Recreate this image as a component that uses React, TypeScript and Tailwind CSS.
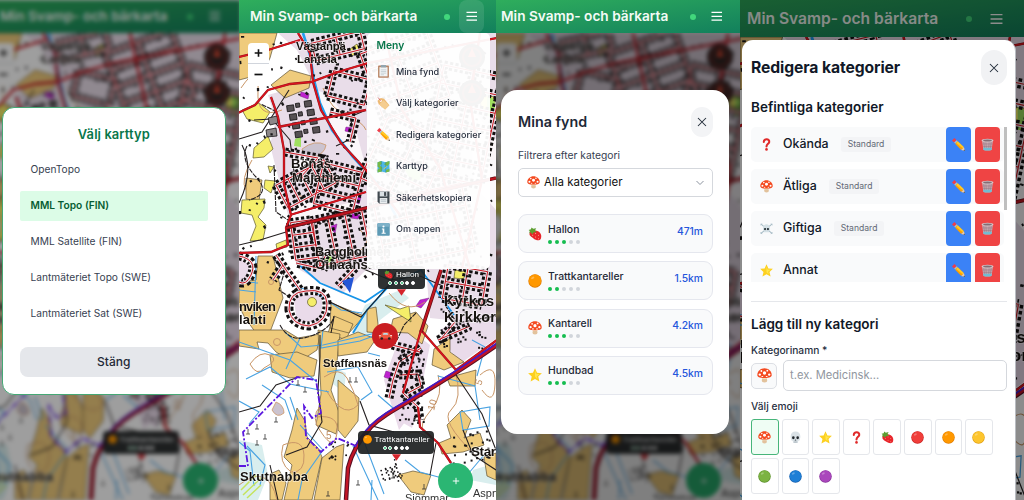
import React from 'react';

type Kind = 'mushroom' | 'clipboard' | 'tag' | 'pencil' | 'map' | 'disk' | 'info' | 'berry' | 'star' | 'question' | 'skull' | 'bones' | 'trash' | 'red' | 'orange' | 'yellow' | 'green' | 'blue' | 'purple';

const discs: Record<string, [string, string]> = {
  red: ['#f03e3a', '#c8201f'], orange: ['#ff9800', '#e07c00'], yellow: ['#fdc52d', '#e09d10'],
  green: ['#7cb342', '#5b8f2a'], blue: ['#1e7fd6', '#155fae'], purple: ['#aa47bc', '#86309a'],
};

function Emoji({ k, className = 'size-3.5' }: { k: Kind; className?: string }) {
  const d = discs[k];
  return (
    <svg viewBox="0 0 24 24" className={`${className} shrink-0`}>
      {d && <><circle cx="12" cy="12" r="11.500" fill={d[1]} /><circle cx="12" cy="11.5" r="10.600" fill={d[0]} /><ellipse cx="8" cy="6.5" rx="3" ry="1.8" fill="#fff" opacity=".3" transform="rotate(-30 8 6.5)" /></>}
      {k === 'mushroom' && <><path d="M9 12h6l1.3 8q.2 3-4.3 3t-4.3-3z" fill="#e2c29c" /><path d="M8.6 15h6.8l.4 2H8.2z" fill="#f7e6c9" /><path d="M.5 11C.5 5 6 .5 12 .5S23.500 5 23.500 11c0 3-3 4.800-11.500 4.800S.5 14 .5 11z" fill="#f44a20" /><g fill="#fff"><circle cx="12" cy="8" r="2.700" /><circle cx="4.500" cy="10.500" r="1.900" /><circle cx="19.500" cy="10.500" r="1.900" /><circle cx="7" cy="4.800" r="1.500" /><circle cx="16.500" cy="4.200" r="1.500" /><ellipse cx="8.500" cy="13.500" rx="1.600" ry=".9" /><ellipse cx="15.500" cy="13.500" rx="1.600" ry=".9" /></g></>}
      {k === 'berry' && <><path d="M3 10c2-5 8-5 13-3 6 2 8 8 6 13-2 4-8 3-12 0S1 15 3 10z" fill="#e8252b" /><g fill="#ffb199"><circle cx="8" cy="14" r=".9" /><circle cx="13" cy="11" r=".9" /><circle cx="13" cy="17" r=".9" /><circle cx="18" cy="14" r=".9" /><circle cx="18" cy="20" r=".9" /></g><path d="M2 11L3 7 1 5l4-1 1-3 3 2 5-1-2 4 3 3-5 0-3 4-2-4z" fill="#5c9e31" /></>}
      {k === 'star' && <><path d="M12 .5l3.500 7.600 8.300.8-6.200 5.700 1.900 8.400L12 18.700l-7.500 4.300 1.900-8.400L.2 8.900l8.300-.8z" fill="#fdd020" /><path d="M12 4l2 6 6 .5-5 3.500 1 5-4-4z" fill="#ffe64e" /></>}
      {k === 'question' && <><path d="M7 7.500C7 0 18 1 17 7.500c-.5 3-5 4-5 8" fill="none" stroke="#e02a2a" strokeWidth="3.800" strokeLinecap="round" /><circle cx="12" cy="21" r="2.400" fill="#e02a2a" /></>}
      {k === 'skull' && <><path d="M3 10C3 4 7 1 12 1s9 3 9 9c0 3-1 4-1 6 0 1.500-2 1.500-3 2l-.5 4H7.500L7 18c-1-.5-3-.5-3-2 0-2-1-3-1-6z" fill="#d9e1e6" /><ellipse cx="8" cy="12.500" rx="2.400" ry="2.600" fill="#20262b" /><ellipse cx="16" cy="12.500" rx="2.400" ry="2.600" fill="#20262b" /><path d="M12 15l-1.300 2.500h2.600zM10 19v3M12 19v3M14 19v3" fill="#20262b" stroke="#8b979e" strokeWidth=".7" /></>}
      {k === 'bones' && <><path d="M2 4l20 17M22 4L2 21" stroke="#a9bdc7" strokeWidth="2.200" strokeLinecap="round" /><path d="M1 5.500l3-2M20 3.500l3 2M1 19.500l3 2M20 21.500l3-2" stroke="#a9bdc7" strokeWidth="1.800" /><path d="M5.500 11c0-9 13-9 13 0v4l-2 1v3h-9v-3l-2-1z" fill="#d5e1e6" /><circle cx="9.300" cy="13" r="2" fill="#1f2a30" /><circle cx="14.700" cy="13" r="2" fill="#1f2a30" /></>}
      {k === 'pencil' && <><path d="M0 4.500L4.500 0l4 4L4 8.500z" fill="#ef3e4a" /><path d="M4 8.500l4.500-4.500 2 2L6 10.500z" fill="#a9bcc6" /><path d="M6 10.500L10.500 6 22 17l-5 5z" fill="#ffa000" /><path d="M7.500 9L10.500 6 22 17l-2 2z" fill="#ffca28" /><path d="M17 22l5-5 2 7z" fill="#efc9a4" /><path d="M21 23.200l2-2 1 2.800z" fill="#37474f" /></>}
      {k === 'trash' && <><path d="M2 6h20l-2.500 16q-7.500 2.500-15 0z" fill="#c9a7ae" /><path d="M5 7l2 15M9 7l1 15M15 7l-1 15M19 7l-2 15M3 11h18M4 15.500h16" stroke="#8e7480" strokeWidth=".9" /><path d="M4 18h16l-.5 4q-7.500 2.500-15 0z" fill="#71bdd2" /><ellipse cx="12" cy="4.500" rx="11" ry="3.200" fill="#d6c7ca" /><ellipse cx="12" cy="4.500" rx="8" ry="1.800" fill="#836d75" /></>}
      {k === 'clipboard' && <><rect x="2" y="1" width="20" height="22.500" rx="1.500" fill="#b98565" /><path d="M4.500 4h15v17h-15z" fill="#f1f4f5" /><path d="M7 0h10v4.500H7z" fill="#93a6af" /><path d="M7 9h10M7 12h10M7 15h10M7 18h6" stroke="#a9b8bf" strokeWidth="1" /></>}
      {k === 'tag' && <><path d="M1 7L7 2l6 1 10 12-8 8L3 13z" fill="#edb971" /><path d="M4 14l8-8 10 9-7 8z" fill="#f5cd90" /><circle cx="7" cy="7" r="2" fill="#fff" /><path d="M2 1l5 6" stroke="#d3464f" strokeWidth="1.300" /></>}
      {k === 'map' && <><path d="M1 4l7-2 8 2 7-2v19l-7 2-8-2-7 2z" fill="#4db6e8" /><path d="M1 4l7-2 1 5-4 3 5 4-1 7-8 2v-5l4-3-4-3zM13 8l3-4 7-2v5l-4 4-4-2zM17 18l6-2v5l-7 2z" fill="#76b947" /><path d="M8 2v19M16 4v19" stroke="#277ea7" strokeWidth=".8" /><path d="M12 17l6-5" stroke="#f4d03f" strokeWidth="1.500" /></>}
      {k === 'disk' && <><path d="M1 1h22v22H4l-3-3z" fill="#414a50" /><path d="M5 1h14v9H5z" fill="#d9e0e4" /><path d="M13 2h4v7h-4z" fill="#424b51" /><path d="M5 13h14v10H5z" fill="#e9edef" /><path d="M7 16h10M7 19h10" stroke="#96a4ad" /></>}
      {k === 'info' && <><rect x=".5" y=".5" width="23" height="23" rx="1.500" fill="#5d9ab5" /><path d="M.5 3q0-2 2-2.500h19q2 .5 2 2.500v4H.5z" fill="#7eb1c8" /><circle cx="12" cy="6.500" r="2" fill="#fff" /><path d="M9 10h4.500v8H16v2H8.500v-2h2v-6H9z" fill="#fff" /></>}
    </svg>
  );
}

/* ---------- map ---------- */
const streetGrid = (cx: number, cy: number, w: number, h: number, deg: number, rows: number, cols: number) => {
  const a = (deg * Math.PI) / 180;
  const p = (x: number, y: number) => `${(cx + x * Math.cos(a) - y * Math.sin(a)).toFixed(1)} ${(cy + x * Math.sin(a) + y * Math.cos(a)).toFixed(1)}`;
  let s = '';
  for (let i = 0; i < rows; i++) { const y = -h / 2 + (h * i) / (rows - 1); s += `M${p(-w / 2, y)}L${p(w / 2, y)}`; }
  for (let i = 0; i < cols; i++) { const x = -w / 2 + (w * i) / (cols - 1); s += `M${p(x, -h / 2)}L${p(x, h / 2)}`; }
  return s;
};

const streets = [
  streetGrid(338, 46, 50, 18, -14, 2, 3),
  streetGrid(349, 88, 38, 26, 14, 2, 2),
  streetGrid(306, 184, 26, 54, 62, 5, 2),
  streetGrid(338, 188, 40, 42, 14, 4, 2),
  streetGrid(341, 238, 52, 46, -12, 2, 4),
  streetGrid(304, 240, 22, 38, -8, 4, 2),
  streetGrid(405, 75, 70, 70, -20, 5, 3),
  streetGrid(462, 125, 60, 110, 12, 7, 3),
  streetGrid(405, 160, 66, 70, 25, 5, 3),
  streetGrid(424, 225, 90, 66, -12, 4, 4),
  streetGrid(465, 285, 40, 34, 10, 3, 3),
  'M330 112L356 118L350 142M285 152L318 158L300 178M326 255L318 268L296 263M355 268L338 286',
  'M289 310Q288 292 306 291Q326 288 327 303Q328 322 309 326Q292 325 289 310Z',
  'M239 256Q258 260 251 275Q246 286 239 282',
  'M276 255L288 273L300 290M283 265L273 280',
  'M421 348L399 362L393 380L389 398M399 375L418 374L421 386L408 393M403 393L418 407L420 420M392 345L420 352M440 340L455 322M438 340L470 326',
].join('');

const mainRoads = [
  'M238 113L255 105L268 90L290 84L311 82L338 72L368 63L497 38',
  'M298 33L310 53L313 82L321 110L341 143L366 170L400 215',
  'M271 97L278 117L284 150L284 184L291 215L286 228L288 245L271 252L238 253',
  'M278 127L366 110M290 215L366 192M239 57L268 50L300 40M421 330L403 393M418 407L420 427L438 443L451 463M421 330L456 370M456 370L497 340',
  'M480 33L470 100L482 180L462 268M385 33L402 110L440 168L470 268',
].join('');

const fields = [
  'M239 33H277L270 58L262 74L239 80Z', 'M271 85L290 70L311 76L309 88L285 98Z', 'M246 178L262 180L259 201L246 199Z',
  'M239 282L256 280L258 256L273 256L283 298L270 332L256 333L245 318L239 306Z', 'M331 303L364 316L349 333L330 328Z M334 316L353 324L346 340L328 333Z',
  'M239 330H285L298 338L320 334L317 350L296 364L276 352L268 343L257 342L259 349L239 346Z',
  'M270 355L297 352L317 360L314 376L290 378L272 372Z', 'M318 330L340 334L336 371L331 390L340 415L336 434L316 425L321 394Z',
  'M338 340L358 332L376 339L367 352L338 356Z', 'M297 408L305 421L307 437L318 448L322 457L312 500H284L292 465L284 457L292 430Z',
  'M322 458L336 447L344 444L340 500H314Z', 'M338 380L359 398L358 421L345 438L338 430Z', 'M367 309L376 307L379 333L367 332Z',
  'M393 319L416 312L428 326L422 344L408 333L390 332Z', 'M434 349L450 338L450 352L464 362L444 370L432 365Z',
  'M447 378L476 370L475 386L450 386Z', 'M447 425L462 410L471 420L464 438L480 433L484 445L463 452L442 454L439 443L451 438Z',
  'M398 475L413 471L431 475L424 495L411 492Z', 'M270 474L279 470L286 483L282 500H270Z', 'M484 457L496 453V480L487 476Z',
];

const dots: [number, number][] = Array.from({ length: 150 }, (_, i) => {
  const x = 241 + ((i * 73.7 + (i % 7) * 11) % 254), y = 36 + ((i * 41.3 + (i % 5) * 17) % 240);
  return [x, y];
});

function Place({ x, y, w, size = 13, children }: { x: number; y: number; w?: number; size?: number; children: string }) {
  return <text x={x} y={y} textLength={w} fontSize={size} fontFamily="Liberation Sans, sans-serif" fontWeight="700" fill="#16120f" stroke="#fff" strokeWidth="1.300" paintOrder="stroke" strokeOpacity=".6">{children}</text>;
}

function Terrain({ className = '' }: { className?: string }) {
  return (
    <svg viewBox="239 33 257 467" className={className} preserveAspectRatio="xMinYMin slice">
      <path d="M239 33H496V500H239z" fill="#fff" />
      <path d="M278 33H497V325L430 318L426 268L366 270L342 294L300 270L287 240L300 205L288 215L270 145L276 120L268 95L313 82L297 50z" fill="#e9dde9" />
      <path d="M404 325L430 345L418 405L399 430L384 380zM440 330L460 318L497 300V338L458 365zM397 400L418 410L412 428L398 420zM293 295H322V322H297zM239 258L250 265L246 284H239z" fill="#eadbea" />
      <path d="M365 305L400 290L409 298L380 320L367 350L352 332zM329 365L346 373L344 392L330 382zM239 440L262 445L268 475L258 500H239zM473 470L496 463V485L470 480z" fill="#d9eeee" />
      <path d="M316 90L330 95L357 134L366 168L330 128zM300 155L318 160L305 172L290 168zM470 105L496 140V210L474 185zM300 200L340 205L360 200L360 205L290 222z" fill="#fbf7fa" />
      {fields.map((d) => <path key={d} d={d} fill="#efcb7c" stroke="#5f5234" strokeWidth=".7" />)}
      <g fill="#f5ee69" stroke="#5d592e" strokeWidth=".7">
        <path d="M242 110L259 103L270 112L263 123L247 119zM254 148L268 136L273 149L264 157L253 158z" />
        <path d="M242 200L265 199L264 208L258 217L266 225L263 240L250 241L256 226L252 215L241 213zM265 180L275 181L271 193L264 188zM268 166L274 167L270 173zM276 244L286 240L287 247L277 249z" />
        <path d="M385 305L400 309L409 306L411 322L400 315zM455 270L468 272L463 279L454 278zM480 95L495 97V110L481 109zM350 49L357 44L360 51L352 56z" /><circle cx="312" cy="302" r="4.500" />
      </g>
      <path d="M295 139l6-2 0 10-7-1zM323 258q9-5 11 2t-5 7zM405 170q9-7 15 2t-9 9zM487 96q8 0 8 10v10h-8z" fill="#a0e060" />
      <path d="M302 149Q315 139 326 145Q325 154 312 158Q303 157 302 149zM276 402Q284 405 284 413Q277 419 272 410z" fill="#cbc3cf" stroke="#cc9768" strokeWidth=".8" />
      <path d="M301 92l8 2-1 5-8-3zM346 127l8 1-1 5-8-2zM353 195l8 2-2 7-7-3zM329 227l8-3-2 9zM352 213l8 2-2 4-7-1zM420 300l9-2-8 10-5-2zM386 371l6 2-2 6-6-2z" fill="#be22cf" stroke="#762083" strokeWidth=".5" />
      <g fill="none" stroke="#c99667" strokeWidth="1">
        <path d="M241 88Q260 60 258 90T282 110M252 160Q240 180 246 190M323 88Q331 110 347 116T366 130M250 364Q260 350 270 355T264 368Q257 377 250 364zM324 377Q340 366 347 378T358 405Q349 414 340 407T326 390M316 417Q340 414 337 433T321 432Q310 418 320 406M438 375Q444 395 431 410T424 432M455 370Q463 400 451 410T475 455M389 293Q406 315 425 302M480 375Q496 361 495 384T482 390M239 485Q268 462 277 500M283 445Q303 437 304 455T291 472Q278 463 283 445M360 230Q374 240 360 251M405 435Q417 427 430 440" />
        <circle cx="300" cy="198" r="2.300" /><circle cx="277" cy="342" r="3.500" /><circle cx="271" cy="282" r="2.500" />
      </g>
      <g fill="none" stroke="#4aa3e2" strokeWidth="1.100">
        <path d="M239 281L258 283M239 290L256 292M256 256L254 325M239 342L290 360L317 382M285 332L301 347L323 345L376 333M262 385L285 400L292 420M246 379L270 367L290 384L329 392M323 330L321 348L360 341L379 334M300 338L286 369M327 372L358 367L372 392L361 400M353 446L378 500M365 444L384 494M405 460L420 472L442 478L463 480L484 455M438 376L475 386L480 420M460 412L490 407L489 426L463 430zM447 455L460 481M378 395L393 408M372 480L371 500M300 425L323 450L302 480L298 500M239 442L250 451L254 486M247 446L265 465L260 485M472 340L485 347L477 376M368 353L380 356M294 286L315 292L341 310L362 313M290 397L298 420M239 401L259 412L249 424" />
        <path d="M303 33L310 55L314 80L320 103L332 130L353 157L380 186L398 220" stroke="#219ff2" strokeWidth="2.600" />
        <path d="M297 263L320 283L365 302L390 285L421 270L454 315M390 285L367 310L353 333" stroke="#1694e8" strokeWidth="1.800" />
      </g>
      <path d="M241 490l15-15M243 495l18-17M247 498l14-13" stroke="#c5e45d" strokeWidth="1.500" />
      <g fill="none" stroke="#241f20" strokeWidth="1.100">
        <path d="M239 412L260 406L276 385L299 377M320 335L320 357L318 390L322 422L307 447L286 455M239 139L262 132L289 90M254 120L272 119L290 140L297 196M239 203Q255 170 242 145M239 245L260 240L286 232M366 110L350 117L355 137L336 146M454 372L482 414L496 450M463 430L473 455L496 470M360 401L369 425L394 432M326 300L361 317L389 285L397 271M334 317L331 333M270 465L278 500M430 475L436 443M361 268L390 280L420 276L445 287" />
        <path d="M247 146Q240 160 256 177T249 200M285 270L279 290L288 296M274 165L276 212L288 220M277 112L261 104M280 325Q290 344 311 336T334 316M416 313L404 325L397 340M445 305L457 323L496 316" strokeDasharray="5 1" />
      </g>
      <path d={streets} fill="none" stroke="#121010" strokeWidth="9" strokeDasharray="3.200 2.300" />
      <path d={streets} fill="none" stroke="#efe4ec" strokeWidth="3" />
      <path d={streets} fill="none" stroke="#c5171f" strokeWidth="1" />
      <g fill="#565053" stroke="#161415" strokeWidth=".8">
        {[0, 1, 2, 3].map((r) => [0, 1, 2].map((c) => <rect key={`${r}-${c}`} x={288 + c * 9 + r * 1.5} y={104 + r * 9 - c} width={c === 1 ? 4 : 7} height={6 - (c % 2) * 2} transform="rotate(-8 300 115)" />))}
        <path d="M268 118l9-2 1 7-8 2zM266 130l10-2 1 8-10 1z" fill="#8d8789" />
      </g>
      <g fill="#181617">
        {dots.map(([x, y], i) => <rect key={i} x={x} y={y} width={i % 3 ? 2.2 : 3.2} height={i % 2 ? 2.3 : 1.7} transform={`rotate(${(i * 29) % 90} ${x} ${y})`} />)}
        {dots.slice(0, 70).map(([x, y], i) => <rect key={`s${i}`} x={399 + (x * 1.7 + i) % 24} y={345 + (y * 2.3) % 78} width="2" height="2" />)}
        {dots.slice(0, 32).map(([x, y], i) => <circle key={`d${i}`} cx={381 + (x * 1.7) % 18 + (i % 5)} cy={455 + (y * 2.3) % 26} r=".9" />)}
        {dots.slice(0, 45).map(([x, y], i) => <rect key={`h${i}`} x={440 + (x * 2.1) % 52} y={300 + (y * 1.3) % 48} width="2" height="2" />)}
        {dots.slice(0, 28).map(([x, y], i) => <rect key={`f${i}`} x={450 + (x * 2.1) % 40} y={430 + (y * 1.7) % 34} width="2" height="2" />)}
        {dots.slice(0, 16).map(([x, y], i) => <circle key={`g${i}`} cx={329 + (x * 2.1) % 20} cy={437 + (y * 1.7) % 28} r="1" />)}
      </g>
      <g stroke="#333" strokeWidth=".8">
        {[[248, 432], [257, 443], [265, 437], [276, 420], [298, 383], [305, 390], [257, 427], [350, 380], [356, 380], [393, 476], [358, 483], [328, 494], [424, 487]].map(([x, y]) => <path key={`${x}-${y}`} d={`M${x} ${y - 3}v5m-2 0h4`} />)}
      </g>
      <path d={mainRoads} fill="none" stroke="#8e1520" strokeWidth="2.300" />
      <path d={mainRoads} fill="none" stroke="#da141d" strokeWidth="1.500" />
      <path d="M286 228L366 208L420 195L496 178M441 270L421 332" fill="none" stroke="#611018" strokeWidth="3.600" />
      <path d="M286 228L366 208L420 195L496 178M441 270L421 332" fill="none" stroke="#c0141e" strokeWidth="2.200" />
      <path d="M346 500L348 468Q353 447 371 427C390 408 416 402 497 345" fill="none" stroke="#581023" strokeWidth="4.500" />
      <path d="M346 500L348 468Q353 447 371 427C390 408 416 402 497 345" fill="none" stroke="#c31526" strokeWidth="2.400" />
      <path d="M355 447Q360 436 371 425C390 406 416 400 497 343" fill="none" stroke="#471bc3" strokeWidth="1.700" />
      <path d="M239 466H248L243 432L297 377L316 380L321 413L312 418L304 406L306 437L321 452L337 438L356 446" fill="none" stroke="#5b19df" strokeWidth="1.800" strokeDasharray="7 2 2 2" />
      <g fontSize="10" fontFamily="Liberation Sans, sans-serif" fill="#b98150" opacity=".9"><text transform="translate(434 411) rotate(-75)">10</text><text x="326" y="439">5</text><text transform="translate(481 386) rotate(-70)">5</text></g>
      <Place x={296} y={50} w={50} size={11.500}>Västanpä</Place><Place x={297} y={63} w={40} size={11.500}>Lantela</Place>
      <Place x={291} y={168} w={40} size={13}>Bönäs</Place><Place x={292} y={182} w={64} size={13}>Majaniemi</Place>
      <Place x={315} y={256} w={76} size={13}>Baggholmen</Place><Place x={315} y={269} w={77} size={13}>Oinaansaari</Place>
      <Place x={239} y={311} w={37} size={13}>nviken</Place><Place x={239} y={324} w={27} size={13}>lahti</Place>
      <Place x={444} y={306} w={50} size={14.500}>Kyrkos</Place><Place x={444} y={322} w={52} size={14.500}>Kirkkor</Place>
      <Place x={323} y={367} w={64} size={11.300}>Staffansnäs</Place><Place x={240} y={481} w={68} size={13}>Skutnabba</Place>
      <Place x={471} y={456} w={25} size={13.500}>Star</Place>
      <text x="473" y="497" fontSize="11" fontFamily="Liberation Sans" fill="#333">Aspn</text><text x="405" y="502" fontSize="11" fontFamily="Liberation Sans" fill="#333">Sjömmar</text>
      <path d="M342 281L354 277L350 293z" fill="#2456d6" />
      {[57, 93].map((y) => <g key={y}><circle cx="472" cy={y} r="13" fill="#302827" /><circle cx="472" cy={y} r="9" fill="none" stroke="#7b2926" strokeWidth="2" /><path d={`M472 ${y - 9}l4 9h-8z`} fill="#e04832" /></g>)}
    </svg>
  );
}

function Marker({ k, name, score, className }: { k: Kind; name: string; score: number; className: string }) {
  return (
    <div className={`absolute flex flex-col items-center ${className}`}>
      <div className="flex w-full flex-col items-center rounded-sm bg-[#1c2021]/92 pt-[2px] pb-[3px]">
        <div className="flex items-center gap-[3px] font-['Roboto',sans-serif] text-[8.100px] leading-[12px] whitespace-nowrap text-white"><Emoji k={k} className="size-[9px]" />{name}</div>
        <div className="flex h-[6px] items-center gap-[1.700px]">{[0, 1, 2, 3, 4].map((i) => <span key={i} className={`size-[4px] rounded-full border-[.5px] border-white ${i < score ? 'bg-[#27b66b]' : 'bg-white'}`} />)}</div>
      </div>
      <svg viewBox="0 0 10 7" className="h-[7px] w-[9px]"><path d="M0 0h10L5 7z" fill="#d5232b" /></svg>
    </div>
  );
}

function MapScene() {
  return (
    <div className="absolute top-[33px] left-0 h-[467px] w-[257px] overflow-hidden">
      <Terrain className="size-full" />
      <div className="absolute top-[10px] left-[9px] flex h-[43px] w-[21px] flex-col divide-y divide-gray-300 rounded-sm bg-white">
        <svg viewBox="0 0 21 21" className="h-[21px]"><path d="M6.500 10.500h8M10.500 6.500v8" stroke="#111" strokeWidth="1.700" /></svg>
        <svg viewBox="0 0 21 21" className="h-[21px]"><path d="M6.500 10.500h8" stroke="#111" strokeWidth="1.700" /></svg>
      </div>
      <Marker k="berry" name="Hallon" score={3} className="top-[233px] left-[139px] w-[47px]" />
      <Marker k="orange" name="Trattkantareller" score={2} className="top-[398px] left-[119px] w-[76px]" />
      <div className="absolute top-[290px] left-[133px] flex size-[26px] items-center justify-center rounded-full bg-[#c91d21]">
        <svg viewBox="0 0 16 10" className="w-[15px]"><path d="M1 5l2-1 2-3h6l2 3 2 1v3H1z" fill="#ef5941" /><path d="M5 4l1-2h4l1 2z" fill="#b6dfec" /><circle cx="4" cy="8" r="1.400" fill="#222" /><circle cx="12" cy="8" r="1.400" fill="#222" /><path d="M1 5h2M13 5h2" stroke="#fff" /></svg>
      </div>
      <div className="absolute top-[430px] left-[199px] flex size-[35px] items-center justify-center rounded-full bg-[#2bb673]"><svg viewBox="0 0 10 10" className="size-[8px]"><path d="M5 1v8M1 5h8" stroke="#fff" strokeWidth="1.200" /></svg></div>
    </div>
  );
}

function Header({ big = false, active = false, className = '' }: { big?: boolean; active?: boolean; className?: string }) {
  return (
    <header className={`relative flex shrink-0 items-center justify-between bg-linear-to-br from-[#2fae5c] to-[#12805c] ${big ? 'h-[37px] pr-[15px] pl-[7px]' : 'h-[33px] pr-[12px] pl-[11px]'} ${className}`}>
      <span className={`font-semibold whitespace-nowrap text-[#f4fbf6] ${big ? 'text-[15.600px]' : 'text-[13.650px]'}`}>Min Svamp- och bärkarta</span>
      <div className={`flex items-center ${big ? 'gap-[12px]' : 'gap-[9px]'}`}>
        <i className="size-[6px] rounded-full bg-[#42d77c]" />
        <span className={`flex w-[25px] items-center justify-center rounded-lg ${active ? 'h-[33px] bg-white/10' : 'h-[25px]'}`}>
          <svg viewBox="0 0 12 11" className={big ? 'w-[13px]' : 'w-[11.500px]'}><path d="M.5 1.500h11M.5 5.500h11M.5 9.500h11" stroke="#fff" strokeWidth="1.300" /></svg>
        </span>
      </div>
    </header>
  );
}

const Cross = () => <svg viewBox="0 0 10 10" className="size-[10px]"><path d="M1 1l8 8M9 1L1 9" stroke="#1f2937" strokeWidth="1.050" /></svg>;

function MapTypes() {
  return (
    <section className="relative h-full w-[239px] overflow-hidden">
      <div className="absolute top-0 left-[-16px] h-[500px] w-[257px] blur-[2px]"><Header className="!pr-[14px] !pl-[16px]" /><MapScene /></div>
      <div className="absolute inset-0 bg-black/38" />
      <div className="relative mt-[107px] ml-[2px] flex h-[288px] w-[223.500px] flex-col rounded-[12px] border border-[#45a875] bg-white px-[17px] pt-[16.500px]">
        <h2 className="text-center text-[12.900px] leading-[20px] font-semibold tracking-[.1px] text-[#08764a]">Välj karttyp</h2>
        <ul className="mt-[10px] flex flex-col gap-[6px]">
          {['OpenTopo', 'MML Topo (FIN)', 'MML Satellite (FIN)', 'Lantmäteriet Topo (SWE)', 'Lantmäteriet Sat (SWE)'].map((t, i) => (
            <li key={t} className={`flex h-[30px] items-center rounded-[2px] pl-[10.500px] text-[10.200px] whitespace-nowrap ${i === 1 ? 'bg-[#dcfce7] font-semibold text-[#075c32]' : 'text-[#374151]'}`}>{t}</li>
          ))}
        </ul>
        <button className="mt-[18px] h-[30px] shrink-0 rounded-[8px] bg-[#e5e7eb] text-[12px] font-medium text-[#1f2937]">Stäng</button>
      </div>
    </section>
  );
}

const menu: [Kind, string][] = [['clipboard', 'Mina fynd'], ['tag', 'Välj kategorier'], ['pencil', 'Redigera kategorier'], ['map', 'Karttyp'], ['disk', 'Säkerhetskopiera'], ['info', 'Om appen']];

function MapMenu() {
  return (
    <section className="relative h-full w-[257px] overflow-hidden">
      <MapScene />
      <Header active />
      <nav className="relative ml-[128px] h-[236px] w-[123px] rounded-[5px] bg-white/95 pt-[4px] pl-[9.500px]">
        <h2 className="text-[10.300px] leading-[17px] font-semibold text-[#08764a]">Meny</h2>
        <ul className="mt-[2px]">
          {menu.map(([k, t]) => <li key={t} className="flex h-[31.500px] items-center gap-[6.500px] text-[9.050px] font-medium whitespace-nowrap text-[#28303f]"><Emoji k={k} className="size-[13px]" />{t}</li>)}
        </ul>
      </nav>
    </section>
  );
}

const finds: [Kind, string, number, string][] = [['berry', 'Hallon', 3, '471m'], ['orange', 'Trattkantareller', 2, '1.5km'], ['mushroom', 'Kantarell', 3, '4.2km'], ['star', 'Hundbad', 3, '4.5km']];

function Finds() {
  return (
    <section className="relative h-full w-[244px] overflow-hidden">
      <div className="absolute top-0 left-[-9px] h-full w-[257px] blur-[2px]"><MapScene /></div>
      <div className="absolute inset-0 bg-black/50" />
      <Header className="-ml-[6px] !w-[250px] !pr-[10.500px]" />
      <div className="relative mt-[57px] ml-[5px] flex h-[344px] w-[228px] flex-col rounded-[16px] bg-white pr-[16px] pl-[17px] pt-[17px]">
        <div className="flex items-center justify-between"><h2 className="text-[14.300px] font-semibold text-[#1f2937]">Mina fynd</h2><button className="flex h-[30px] w-[22px] items-center justify-center rounded-full bg-[#f3f4f6]"><Cross /></button></div>
        <label className="mt-[11px] text-[10.300px] leading-[14px] text-[#374151]">Filtrera efter kategori</label>
        <div className="mt-[6px] flex h-[29px] items-center rounded-[5px] border border-[#d5d8dd] px-[8px] text-[11.500px] text-[#111]">
          <Emoji k="mushroom" className="size-[13px]" /><span className="ml-[4px] grow">Alla kategorier</span>
          <svg viewBox="0 0 8 6" className="w-[8px]"><path d="M.5 1L4 4.500 7.500 1" fill="none" stroke="#8b929e" /></svg>
        </div>
        <ul className="mt-[17px] flex flex-col gap-[8.300px]">
          {finds.map(([k, n, s, d]) => (
            <li key={n} className="flex h-[39px] items-center rounded-[9px] border border-[#e5e7ee] bg-[#f9fafb] pr-[9px] pl-[9px]">
              <Emoji k={k} className="size-[14px]" />
              <div className="-mt-[1px] ml-[6px] grow"><div className="text-[10.400px] leading-[14px] font-medium text-[#1f2937]">{n}</div>
                <div className="mt-[3px] flex gap-[3px]">{[0, 1, 2, 3, 4].map((i) => <i key={i} className={`size-[4px] rounded-full ${i < s ? 'bg-[#16bd50]' : 'bg-[#d1d5db]'}`} />)}</div></div>
              <span className="-mt-[4px] text-[10.300px] font-medium text-[#2556dc]">{d}</span>
            </li>
          ))}
        </ul>
      </div>
    </section>
  );
}

const cats: [Kind, string][] = [['question', 'Okända'], ['mushroom', 'Ätliga'], ['bones', 'Giftiga'], ['star', 'Annat']];
const emojis: Kind[] = ['mushroom', 'skull', 'star', 'question', 'berry', 'red', 'orange', 'yellow', 'green', 'blue', 'purple'];

function EditCategories() {
  return (
    <section className="relative h-full w-[284px] overflow-hidden">
      <div className="absolute top-0 left-0 h-[500px] w-[257px] origin-top-left scale-[1.12]"><MapScene /></div>
      <Header big />
      <div className="absolute inset-0 bg-black/45" />
      <div className="relative mt-[3px] ml-[2px] h-[480px] w-[274px] rounded-[11px] border-r border-[#b9bcc1] bg-white pr-[8px] pl-[9px]">
        <div className="flex items-center justify-between pt-[10px]"><h2 className="text-[15.700px] font-bold tracking-[-.1px] text-[#111827]">Redigera kategorier</h2><button className="flex h-[35px] w-[26px] items-center justify-center rounded-full bg-[#f1f2f4]"><Cross /></button></div>
        <h3 className="mt-[12px] text-[13.500px] leading-[20px] font-semibold text-[#111827]">Befintliga kategorier</h3>
        <div className="mt-[10px] flex h-[155px] justify-between overflow-hidden">
          <ul className="flex w-[253px] flex-col gap-[7px]">
            {cats.map(([k, n], i) => (
              <li key={n} className="flex h-[35px] shrink-0 items-center gap-[4px] rounded-[5px] bg-[#f9fafb] pr-[4px] pl-[9px]">
                <Emoji k={k} className="size-[13px]" />
                <span className="ml-[6px] text-[12.400px] font-medium text-[#111827]">{n}</span>
                {i < 3 && <span className="ml-[8px] rounded-[3px] bg-[#f3f4f6] px-[7px] text-[8.600px] leading-[15px] text-[#626975]">Standard</span>}
                <button className="ml-auto flex h-[35px] w-[25px] items-center justify-center rounded-[4px] bg-[#3b82f6]"><Emoji k="pencil" className="size-[13px]" /></button>
                <button className="flex h-[35px] w-[25px] items-center justify-center rounded-[4px] bg-[#ef4444]"><Emoji k="trash" className="size-[13px]" /></button>
              </li>
            ))}
          </ul>
          <div className="h-[83px] w-[3px] bg-[#bfbfbf]" />
        </div>
        <hr className="mt-[19px] border-[#e5e7eb]" />
        <h3 className="mt-[12px] text-[13.500px] leading-[20px] font-semibold text-[#111827]">Lägg till ny kategori</h3>
        <label className="mt-[9px] block text-[10.200px] leading-[14px] font-medium text-[#28303f]">Kategorinamn *</label>
        <div className="mt-[3px] flex items-center gap-[6px]">
          <span className="flex size-[26px] items-center justify-center rounded-[5px] border border-[#dcdfe4] bg-[#f9fafb]"><Emoji k="mushroom" className="size-[15px]" /></span>
          <div className="flex h-[31px] grow items-center rounded-[5px] border border-[#d5d8dd] pl-[6px] text-[11.200px] text-[#9197a0]">t.ex. Medicinsk...</div>
        </div>
        <label className="mt-[8px] block text-[10.200px] leading-[14px] font-medium text-[#28303f]">Välj emoji</label>
        <div className="mt-[6px] flex flex-wrap gap-x-[3px] gap-y-[3px]">
          {emojis.map((k, i) => <button key={k} className={`flex h-[36px] w-[27.600px] items-center justify-center rounded-[3px] border ${i === 0 ? 'border-[#47b57a] bg-[#effdf4]' : 'border-[#e5e7eb] bg-white'}`}><Emoji k={k} className="size-[13px]" /></button>)}
        </div>
      </div>
    </section>
  );
}

export default function App() {
  return (
    <main className="flex h-[500px] w-[1024px] overflow-hidden font-['Inter',sans-serif]">
      <MapTypes /><MapMenu /><Finds /><EditCategories />
    </main>
  );
}
